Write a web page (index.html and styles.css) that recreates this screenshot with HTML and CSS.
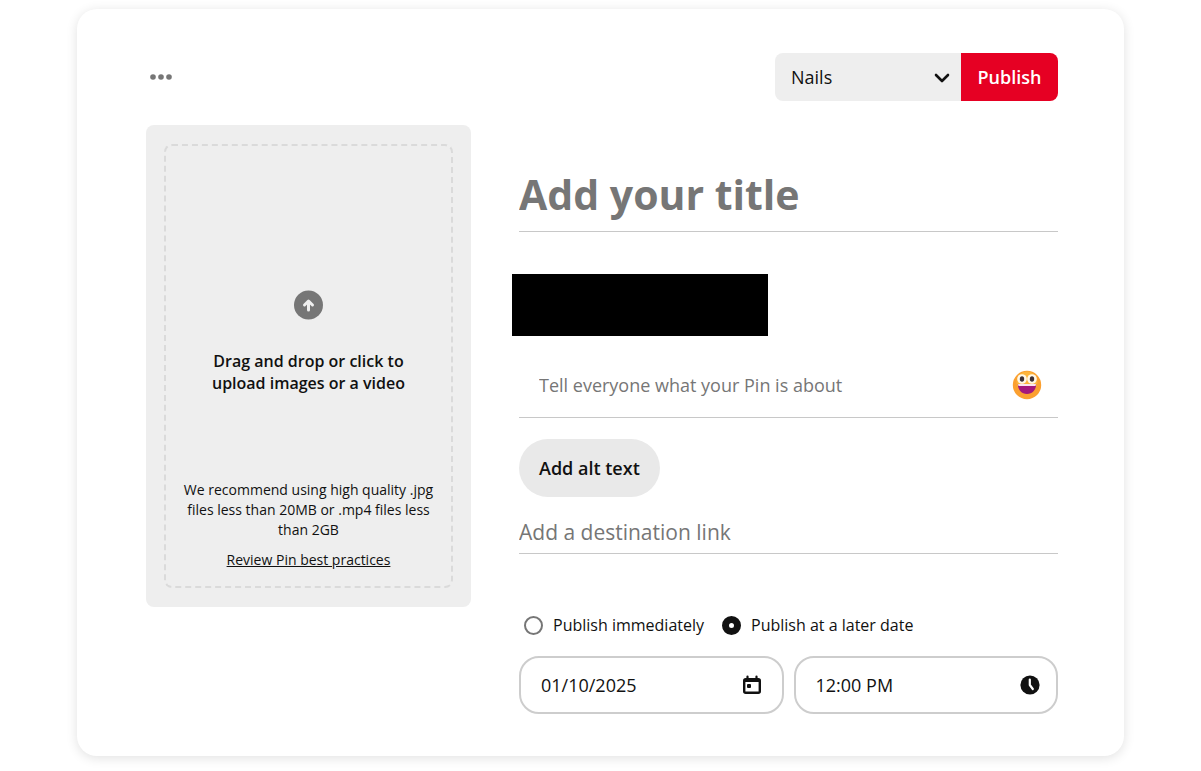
FILE: index.html
```html
<!DOCTYPE html>
<html lang="en">
<head>
    <meta charset="UTF-8">
    <meta name="viewport" content="width=device-width, initial-scale=1.0">
    <title>Create Pin</title>
    <link rel="stylesheet" href="styles.css">
</head>
<body>
    <main class="card">
        <header class="toolbar">
            <button type="button" class="more-btn" aria-label="More options">
                <svg width="22" height="6" viewBox="0 0 22 6" fill="#767676">
                    <circle cx="3" cy="3" r="2.8"/>
                    <circle cx="11" cy="3" r="2.8"/>
                    <circle cx="19" cy="3" r="2.8"/>
                </svg>
            </button>
            <div class="publish-group">
                <div class="board-picker">
                    <select class="board-select" aria-label="Board">
                        <option>Nails</option>
                    </select>
                    <svg class="chevron" width="16" height="10" viewBox="0 0 16 10" fill="none" stroke="#111" stroke-width="2.6" stroke-linecap="round" stroke-linejoin="round">
                        <path d="M2 2l6 6 6-6"/>
                    </svg>
                </div>
                <button type="submit" class="publish-btn" form="pinForm">Publish</button>
            </div>
        </header>

        <div class="content">
            <section class="upload">
                <div class="dropzone">
                    <div class="drop-main">
                        <svg width="29" height="30" viewBox="0 0 29 30">
                            <circle cx="14.5" cy="15" r="14.5" fill="#767676"/>
                            <path d="M14.5 20v-8M10.5 15l4-4 4 4" fill="none" stroke="#efefef" stroke-width="3" stroke-linecap="round" stroke-linejoin="round"/>
                        </svg>
                        <p class="drop-title">Drag and drop or click to upload images or a video</p>
                    </div>
                    <p class="drop-hint">We recommend using high quality .jpg files less than 20MB or .mp4 files less than 2GB</p>
                    <a href="#" class="drop-link">Review Pin best practices</a>
                </div>
            </section>

            <form class="pin-form" id="pinForm">
                <input type="text" class="title-input" placeholder="Add your title" aria-label="Title">

                <div class="profile"></div>

                <div class="description">
                    <input type="text" class="description-input" placeholder="Tell everyone what your Pin is about" aria-label="Description">
                    <button type="button" class="emoji-btn" aria-label="Add emoji">
                        <svg width="30" height="30" viewBox="0 0 30 30">
                            <circle cx="15" cy="15" r="14.2" fill="#fba030"/>
                            <circle cx="15" cy="12" r="10.5" fill="#fdb53c"/>
                            <circle cx="10" cy="9" r="4.8" fill="#fff8e8"/>
                            <circle cx="20" cy="9" r="4.8" fill="#fff8e8"/>
                            <ellipse cx="10" cy="9" rx="2.2" ry="2.8" fill="#3c2f35"/>
                            <ellipse cx="20" cy="9" rx="2.2" ry="2.8" fill="#3c2f35"/>
                            <path d="M5.8 14h18.4c0 6-4 10-9.2 10s-9.2-4-9.2-10z" fill="#a4187c"/>
                            <path d="M6 14h18l-.5 2h-17z" fill="#fbe6ee"/>
                        </svg>
                    </button>
                </div>

                <button type="button" class="alt-btn">Add alt text</button>

                <input type="url" class="link-input" placeholder="Add a destination link" aria-label="Destination link">

                <div class="schedule">
                    <label class="option">
                        <input type="radio" name="when">
                        <span>Publish immediately</span>
                    </label>
                    <label class="option">
                        <input type="radio" name="when" checked>
                        <span>Publish at a later date</span>
                    </label>
                </div>

                <div class="date-row">
                    <div class="field field-date">
                        <input type="text" value="01/10/2025" aria-label="Date">
                        <svg width="20" height="20" viewBox="0 0 20 20">
                            <path d="M5.5 1.5v3M14.5 1.5v3" stroke="#111" stroke-width="2.2" stroke-linecap="round"/>
                            <rect x="2.2" y="4.2" width="15.6" height="13.6" rx="1.5" fill="none" stroke="#111" stroke-width="2.4"/>
                            <path d="M2 4h16v3H2z" fill="#111"/>
                            <rect x="5" y="9" width="4" height="4" rx="1" fill="#111"/>
                        </svg>
                    </div>
                    <div class="field">
                        <input type="text" value="12:00 PM" aria-label="Time">
                        <svg width="20" height="20" viewBox="0 0 20 20">
                            <circle cx="10" cy="10" r="9.6" fill="#111"/>
                            <path d="M9.8 4.5V10l3 4" fill="none" stroke="#fff" stroke-width="2.2" stroke-linecap="round" stroke-linejoin="round"/>
                        </svg>
                    </div>
                </div>
            </form>
        </div>
    </main>
</body>
</html>
```
FILE: styles.css
```css
* {
    box-sizing: border-box;
}
body {
    font-family: 'Segoe UI', 'Open Sans', 'Noto Sans', sans-serif;
    background-color: #fff;
    margin: 0;
    padding: 9px 77px 14px;
    color: #111;
}
p {
    margin: 0;
}
input, select, button {
    font-family: inherit;
    color: inherit;
}
button {
    border: none;
    padding: 0;
    background: none;
    cursor: pointer;
}
.card {
    padding: 44px 66px 42px 69px;
    border-radius: 20px;
    background: #fff;
    box-shadow: 0 2px 12px rgba(0, 0, 0, 0.12);
}

/* Top bar */
.toolbar {
    display: flex;
    justify-content: space-between;
    align-items: center;
    margin-bottom: 24px;
}
.more-btn {
    display: flex;
    padding: 4px;
}
.publish-group {
    display: flex;
    height: 48px;
    border-radius: 8px;
    overflow: hidden;
}
.board-picker {
    position: relative;
    width: 186px;
}
.board-select {
    width: 100%;
    height: 100%;
    padding: 0 40px 0 16px;
    border: none;
    background: #eee;
    font-size: 18px;
    appearance: none;
}
.chevron {
    position: absolute;
    right: 11px;
    top: 20px;
    pointer-events: none;
}
.publish-btn {
    width: 97px;
    background: #e60023;
    color: #fff;
    font-size: 18px;
    font-weight: 600;
}

/* Upload panel */
.content {
    display: grid;
    grid-template-columns: 325px minmax(0, 1fr);
    gap: 48px;
    align-items: start;
}
.upload {
    padding: 19px 18px;
    border-radius: 8px;
    background: #eee;
    text-align: center;
}
.dropzone {
    padding: 144px 16px 16px;
    border: 2px dashed #dadada;
    border-radius: 8px;
}
.drop-main {
    margin-bottom: 86px;
}
.drop-main svg {
    display: block;
    margin: 0 auto 30px;
}
.drop-title {
    padding: 0 20px;
    font-size: 16px;
    font-weight: 600;
    line-height: 22px;
}
.drop-hint {
    margin-bottom: 10px;
    font-size: 14px;
    line-height: 20px;
}
.drop-link {
    display: block;
    color: inherit;
    font-size: 14px;
    line-height: 20px;
}

/* Pin details */
.pin-form {
    display: flex;
    flex-direction: column;
    padding-top: 32px;
}
.pin-form input[type="text"],
.pin-form input[type="url"] {
    min-width: 0;
    padding: 0;
    border: 0 solid #c8c8c8;
    background: none;
    outline: none;
}
.pin-form ::placeholder {
    color: #767676;
    opacity: 1;
}
.pin-form .title-input[type="text"] {
    height: 75px;
    border-bottom-width: 1px;
    font-size: 41px;
    font-weight: 700;
}
.profile {
    width: 256px;
    height: 62px;
    margin: 42px 0 16px -7px;
    background: #000;
}
.description {
    display: flex;
    align-items: center;
    height: 66px;
    padding: 0 16px 0 20px;
    border-bottom: 1px solid #c8c8c8;
}
.description-input {
    flex: 1;
    font-size: 18px;
}
.emoji-btn {
    display: flex;
}
.alt-btn {
    align-self: flex-start;
    height: 58px;
    margin-top: 21px;
    padding: 0 20px;
    border-radius: 29px;
    background: #e9e9e9;
    font-size: 18px;
    font-weight: 600;
}
.pin-form .link-input[type="url"] {
    height: 44px;
    margin-top: 13px;
    border-bottom-width: 1px;
    font-size: 21px;
}
.schedule {
    display: flex;
    gap: 18px;
    margin: 59px 0 19px;
    padding-left: 5px;
}
.option {
    display: flex;
    align-items: center;
    gap: 10px;
    font-size: 16px;
    line-height: 24px;
}
.option input {
    appearance: none;
    width: 19px;
    height: 19px;
    margin: 0;
    border: 2px solid #767676;
    border-radius: 50%;
}
.option input:checked {
    border: 7px solid #111;
}
.date-row {
    display: grid;
    grid-template-columns: repeat(2, minmax(0, 1fr));
    gap: 10px;
}
.field {
    display: flex;
    align-items: center;
    height: 58px;
    padding: 0 16px 0 20px;
    border: 2px solid #cdcdcd;
    border-radius: 20px;
}
.field-date {
    padding-right: 20px;
}
.field input {
    flex: 1;
    font-size: 18px;
}
.field svg {
    flex-shrink: 0;
}
```
